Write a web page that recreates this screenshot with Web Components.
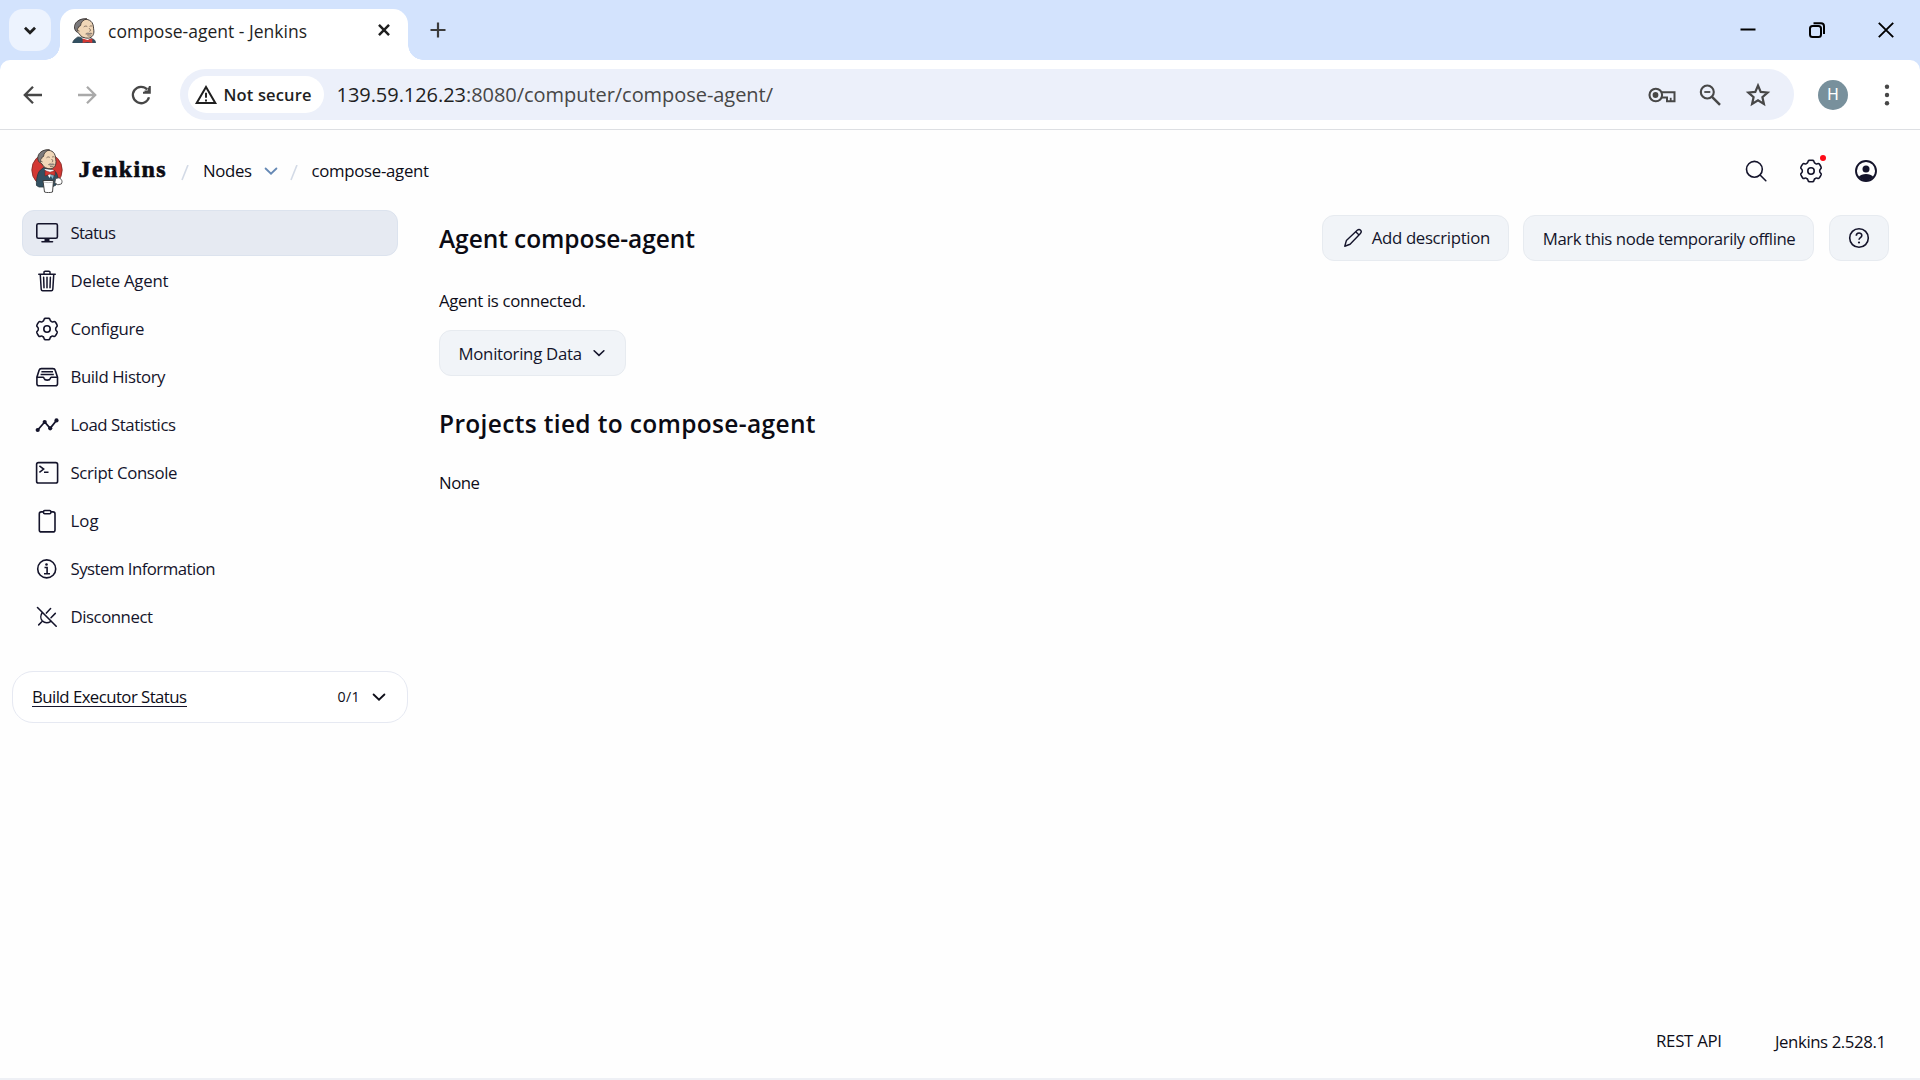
<!DOCTYPE html>
<html lang="en">
<head>
<meta charset="utf-8">
<title>compose-agent - Jenkins</title>
<style>
html,body{margin:0;padding:0;height:100%;overflow:hidden;background:#fefefe}
body{font-family:"Open Sans","Noto Sans",sans-serif;color:#14141f}
</style>
</head>
<body>
<browser-window>
  <jenkins-page></jenkins-page>
</browser-window>
<script>
const polar=(deg,r)=>{const a=(deg-90)*Math.PI/180;return (12+r*Math.cos(a)).toFixed(2)+' '+(12+r*Math.sin(a)).toFixed(2)};
let gear='M'+polar(-30,8.8);
for(let k=0;k<6;k++){const b=k*60;
  gear+=`C${polar(b-17,8)} ${polar(b-20,10.9)} ${polar(b-11,10.8)}A10.8 10.8 0 0 1 ${polar(b+11,10.8)}C${polar(b+20,10.9)} ${polar(b+17,8)} ${polar(b+30,8.8)}`;}
gear+='Z';
const butlerHead=`
<path d="M8.500 13C6.500 10 7.500 5 11 2.500 15 .2 21 .8 23.300 4.500 25 7.500 24.500 10 25 12.500 25.300 16 23.500 19.300 20 19.800 16 20 12.500 18.500 11 15Z" fill="#f0d6b7" stroke="#3a3330" stroke-width=".9"/>
<path d="M8.800 13.500C5.800 11 6.500 6 9 3.700 11.500 1.300 15.500.3 18.500.8 14.800 2 12.800 4 12.500 7.500L10.800 8.500 10.300 12Z" fill="#7b797b" stroke="#3a3330" stroke-width=".8"/>
<path d="M10.600 9.200c-1.700.6-1 3.800.9 3.700" fill="#f0d6b7" stroke="#3a3330" stroke-width=".7"/>
<path d="M15.500 8.800c1-1 2.300-1.100 3.300-.4M21 8.200c.8-.6 1.700-.6 2.400 0M20.500 10c1.600 1.400 1.900 2.700.3 3.100M19 17.300c1.300.5 2.600.4 3.600-.1" fill="none" stroke="#5a4a42" stroke-width=".7"/>
<path d="M17.300 15.700c1.300-1.300 2.500-1.200 3.500-.7 1-.4 1.900-.2 2.700.4-2.200.8-4 1-6.200.3z" fill="#a39d9a" stroke="#5a4a42" stroke-width=".4"/>`;
const ICONS={
 chevDown:'<path d="M6.500 9.500L12 15l5.500-5.500" stroke-width="3"/>',
 close:'<path d="M6.500 6.500l11 11M17.500 6.500l-11 11" stroke-width="2.700"/>',
 plus:'<path d="M12 4.500v15M4.500 12h15" stroke-width="2.200"/>',
 back:'<path d="M21 12H4.500M12 3.800L3.800 12l8.200 8.200" stroke-width="2.300" />',
 fwd:'<path d="M3 12h16.500M12 3.800l8.200 8.200-8.200 8.200" stroke-width="2.300"/>',
 reload:'<path d="M20 14.200A8.200 8.200 0 1 1 18.200 6.500" stroke-width="2.300"/><path d="M20.800 3v6.700H14M15.500 8.600h4.200V4.500" stroke-width="2"/>',
 warn:'<path d="M12 4L2.700 20h18.600z" stroke-width="2"/><path d="M12 9.800v5M12 16.500v2" stroke-width="1.900"/>',
 min:'<path d="M4.500 11.500h15" stroke-width="2"/>',
 restore:'<rect x="5" y="8" width="11" height="11" rx="2.500" stroke-width="2"/><path d="M8.500 5.300h7.500a3 3 0 0 1 3 3v7.700" stroke-width="2"/>',
 winClose:'<path d="M4.800 4.800l14.400 14.400M19.200 4.800L4.800 19.200" stroke-width="1.900"/>',
 key:'<circle cx="7.800" cy="12" r="6.300" stroke-width="2.100"/><circle cx="7.500" cy="12" r="2.900" fill="currentColor" stroke="none"/><path d="M13.800 9.300H26.500v9h-7.500v-3.800h-5.200" stroke-width="2"/><path d="M22.700 18.300v-3.500" stroke-width="1.800"/>',
 zoomOut:'<circle cx="9.300" cy="9" r="6.500" stroke-width="2.100"/><path d="M14 13.800l8 8" stroke-width="2.500"/><path d="M6.300 9h6" stroke-width="1.800"/>',
 star:'<path d="M12 2.500l2.700 6.400 6.900.6-5.200 4.600 1.500 6.800-5.900-3.600-5.900 3.600 1.500-6.800L2.400 9.500l6.900-.6z" stroke-width="2.200" stroke-linejoin="miter"/>',
 dots:'<g fill="currentColor" stroke="none"><circle cx="12" cy="3.700" r="2.200"/><circle cx="12" cy="12" r="2.200"/><circle cx="12" cy="20.300" r="2.200"/></g>',
 search:'<g stroke-linecap="round"><circle cx="10.400" cy="10.300" r="7.900"/><path d="M16.300 16.200l5.500 5.500"/></g>',
 gear:`<path d="${gear}" stroke-linejoin="round"/><circle cx="12" cy="12" r="3.200"/>`,
 user:'<clipPath id="c"><circle cx="12" cy="12" r="9.500"/></clipPath><circle cx="12" cy="12" r="10" stroke-width="1.900"/><circle cx="12" cy="10" r="3.500" fill="currentColor" stroke="none"/><path clip-path="url(#c)" d="M4 18.500C6.500 15.500 9 14.900 12 14.900s5.500.6 8 3.600V23H4z" fill="currentColor" stroke="none"/>',
 chevThin:'<path d="M5.500 9l6.500 6.200L18.500 9" stroke-width="2.200" stroke-linecap="round"/>',
 monitor:'<rect x="1.800" y="2.800" width="20.600" height="14.500" rx="1.500"/><path d="M7 20.800h10.500" stroke-linecap="round"/><path d="M9.500 17.500h5v3h-5z" fill="currentColor" stroke="none"/>',
 trash:'<g transform="scale(.046875)" stroke-width="32" stroke-linecap="round" stroke-linejoin="round"><path d="M112 112l20 320c.95 18.490 14.400 32 32 32h184c17.670 0 30.870-13.510 32-32l20-320M80 112h352M192 112V72a23.930 23.930 0 0 1 24-24h80a23.930 23.930 0 0 1 24 24v40M256 176v224M184 176l8 224M328 176l-8 224"/></g>',
 history:'<path d="M1.900 12.200V18.800a2 2 0 0 0 2 2h16.600a2 2 0 0 0 2-2V12.200L20.200 5.300C19.900 4 19 3.600 17.900 3.600H6.400C5.300 3.600 4.500 4 4.100 5.300z"/><path d="M6.400 6.800h11.600M5.600 9.500h13.200" stroke-width="1.400"/><path d="M1.900 12.200h6.300c.6 0 .7.500.8 1 .8 2.600 5.600 2.600 6.400 0 .1-.5.200-1 .8-1h6.300"/>',
 chart:'<path d="M2.700 17L9.700 9l5.500 6.400L21.600 7.200" stroke-width="1.800"/><g fill="currentColor" stroke="none"><circle cx="2.700" cy="17" r="2.100"/><circle cx="9.700" cy="9" r="2.100"/><circle cx="15.200" cy="15.300" r="2.100"/><circle cx="21.500" cy="7.400" r="2.100"/></g>',
 console:'<rect x="1.600" y="1.600" width="21" height="20.400" rx="1.800"/><path d="M4.400 4.800l4.300 3.300-4.300 3.300M9 11.200h4.500" stroke-width="1.500"/>',
 clip:'<rect x="4.300" y="2.900" width="15.700" height="20" rx="2"/><rect x="8.500" y="1.500" width="7.400" height="3.200" rx="1.200" fill="var(--page,#fefefe)" stroke-width="1.500"/>',
 info:'<circle cx="11.700" cy="11.900" r="9"/><circle cx="11.500" cy="7.500" r="1.300" fill="currentColor" stroke="none"/><path d="M9.500 10.500h2.600v6.300M9 16.800h6" stroke-width="1.600"/>',
 plug:'<path d="M2.500 2.500l18.700 18.700" stroke-linecap="round"/><path d="M7.200 7.700C5.500 10 5.300 13.500 7.200 15.800c2.400 2.300 6 2.300 8.700.6M7.300 16.300l-3.600 3.600M15.600 3.600l-4.200 4.500M20.300 8.400L16 12.700" stroke-linecap="round" stroke-width="1.500"/>',
 pencil:'<g stroke-linejoin="round" stroke-width="1.500"><path d="M3 21l1.800-6.200L16.600 3.600c1.300-1.200 2.800-1 3.700-.1s.9 2.300-.2 3.500L8.800 18.800z"/><path d="M15 5.300l3.600 3.500"/></g>',
 help:'<circle cx="12" cy="12" r="9.300"/><path d="M9.300 9.700c0-3.500 5.500-3.400 5.500-.3 0 2.200-2.800 2.200-2.800 4.400" stroke-width="1.600"/><circle cx="12" cy="16.500" r="1.100" fill="currentColor" stroke="none"/>'
};
const define=(name,css,html,after)=>customElements.define(name,class extends HTMLElement{
  connectedCallback(){
    if(this.shadowRoot)return;
    this.attachShadow({mode:'open'}).innerHTML=`<style>*{box-sizing:border-box}${css}</style>`+(typeof html==='function'?html(this):html);
    if(after)after(this);
  }
});

define('ui-icon',':host{display:block;flex:none;line-height:0}svg{display:block;overflow:visible}',el=>{
  const s=el.getAttribute('size')||24,w=el.getAttribute('box')||24;
  return `<svg width="${s*w/24}" height="${s}" viewBox="0 0 ${w} 24" fill="none" stroke="currentColor" stroke-width="1.600">${ICONS[el.getAttribute('name')]}</svg>`;
});

/* Single line of text whose tracking is tuned to the measure given in w. */
define('ui-text',':host{display:block;flex:none;white-space:pre}span{display:inline-block}','<span><slot></slot></span>',el=>{
  const w=+el.getAttribute('w'),span=el.shadowRoot.querySelector('span');
  if(!w)return;
  const n=el.textContent.length,cur=span.getBoundingClientRect().width;
  span.style.letterSpacing=((w-cur)/(n-1))+'px';
  el.style.width=w+'px';
});

define('butler-mark',':host{display:block;flex:none;line-height:0}svg{display:block}',el=>el.hasAttribute('small')
 ?`<svg width="24" height="25" viewBox="4.500 0 22.500 24.500" preserveAspectRatio="none"><path d="M5 25c.3-3 2-4.500 5-6.500l12 1.500c3 .5 4.500 1.500 4.800 5z" fill="#335061" stroke="#263740" stroke-width=".6"/><path d="M13 19l5 4 5-4z" fill="#fff"/>${butlerHead}<path d="M14.500 20l4.500 1.500 4.500-1.500v4.500l-4.500-1-4.500 1z" fill="#d33833"/></svg>`
 :`<svg width="32" height="44" viewBox="0 0 32 44">
 <ellipse cx="16" cy="21" rx="15.200" ry="16.200" fill="#d33833" stroke="#7c2723" stroke-width=".8"/>
 <path d="M5.500 36.500C5 33 6 26 8 22.500l4.500-4 9 2.500c3.500 1 5 4 5.500 9L25 36l-4 2H8z" fill="#335061" stroke="#263740" stroke-width=".8"/>
 <path d="M13.500 20l5 9 4.500-8z" fill="#fff"/>
 ${butlerHead}
 <path d="M18.700 25.500l3 4.500 1.500-5z" fill="#81b0c4"/>
 <path d="M14 21.500l5 1.700 5-1.700v5l-5-1.500-5 2z" fill="#d33833" stroke="#711c18" stroke-width=".5"/>
 <path d="M24.500 30c1.500-1.500 4.500-1.500 5.500.2 1.300 1.300 1.300 3.300.3 4.800l-3.500.8-3-2z" fill="#fff" stroke="#4a4a4a" stroke-width=".9"/>
 <path d="M12 31.500h10.500l-1 11.500c-2 .8-6 .8-8 0z" fill="#fff" stroke="#333" stroke-width=".9"/>
 <path d="M12.300 33c3 .8 7 .8 10 0" fill="none" stroke="#999" stroke-width=".6"/></svg>`);

define('browser-tabs',`
:host{display:flex;height:60px;background:#d3e3fd;padding-left:9px;align-items:flex-start;color:#1f1f1f}
.menu{width:42px;height:42px;margin-top:9px;border-radius:14px;background:#edf3fe;display:flex;align-items:center;justify-content:center}
.tab{position:relative;margin:9px 0 0 9px;width:348px;height:51px;background:#fff;border-radius:15px 15px 0 0;display:flex;align-items:center;padding:0 13px 8px 12px}
.tab::before,.tab::after{content:"";position:absolute;bottom:0;width:15px;height:15px}
.tab::before{left:-15px;background:radial-gradient(circle at 0 0,transparent 14.500px,#fff 15px)}
.tab::after{right:-15px;background:radial-gradient(circle at 100% 0,transparent 14.500px,#fff 15px)}
ui-text{font-size:17.500px;line-height:24px;margin:0 auto 0 12px}
.plus{margin:18px auto 0 18px;color:#3c3c3c}
.win{display:flex;gap:45px;padding:17.500px 22.500px 0 0;color:#000}
`,`<div class="menu"><ui-icon name="chevDown" size="22"></ui-icon></div>
<div class="tab"><butler-mark small></butler-mark><ui-text w="199">compose-agent - Jenkins</ui-text><ui-icon name="close" size="22" style="margin-top:-1px"></ui-icon></div>
<ui-icon class="plus" name="plus"></ui-icon>
<div class="win"><ui-icon name="min"></ui-icon><ui-icon name="restore"></ui-icon><ui-icon name="winClose"></ui-icon></div>`);

define('browser-toolbar',`
:host{display:block;background:#d3e3fd}
.bar{display:flex;align-items:center;height:70px;background:#fff;border-bottom:1px solid #dddfe3;border-radius:10px 10px 0 0;padding:0 21px;color:#474747}
.nav{display:flex;gap:30px}.dim{color:#a9a9a9}
.omni{margin:0 24px 0 27px;flex:1;height:51px;border-radius:26px;background:#ecf0fa;display:flex;align-items:center;padding:0 24px 0 8px}
.chip{width:136px;height:37px;border-radius:19px;background:#fff;display:flex;align-items:center;padding-left:6px;color:#1f1f1f}
.chip ui-text{font-weight:600;font-size:16.500px;line-height:24px;margin-left:5.500px}
.url{font-size:20px;line-height:28px;margin:0 auto 0 12.500px}
.url b{font-weight:400;color:#1f1f1f}
.tools{display:flex;align-items:center;gap:24px}
.avatar{width:30px;height:30px;border-radius:50%;background:#78909c;color:#fff;font:16px/30px Roboto,sans-serif;text-align:center;margin-right:27px}
`,`<div class="bar"><div class="nav"><ui-icon name="back"></ui-icon><ui-icon class="dim" name="fwd"></ui-icon><ui-icon name="reload"></ui-icon></div>
<div class="omni"><div class="chip"><ui-icon name="warn"></ui-icon><ui-text w="88">Not secure</ui-text></div>
<ui-text class="url" w="436.500"><b>139.59.126.23</b>:8080/computer/compose-agent/</ui-text>
<div class="tools"><ui-icon name="key" box="28" style="margin-right:-2px"></ui-icon><ui-icon name="zoomOut"></ui-icon><ui-icon name="star"></ui-icon></div></div>
<div class="avatar">H</div><ui-icon name="dots"></ui-icon></div>`);

define('browser-window',':host{display:flex;flex-direction:column;width:1920px;height:1080px}','<browser-tabs></browser-tabs><browser-toolbar></browser-toolbar><slot></slot>');

define('jenkins-header',`
:host{display:flex;align-items:center;height:80px;padding:2px 42px 0 30.500px}
.brand{font:bold 24px/30px "Liberation Serif",serif;color:#0b0b14;-webkit-text-stroke:.6px #0b0b14;margin:-4px 0 0 16px}
.crumb{font-size:16.800px;line-height:24px}
.sl{display:block;flex:none}
.right{margin-left:auto;display:flex;gap:31px;color:#14142b}
.g{position:relative}.g::after{content:"";position:absolute;left:21px;top:-4px;width:6px;height:6px;border-radius:50%;background:#fe0b18}
`,`<butler-mark></butler-mark><ui-text class="brand" w="87">Jenkins</ui-text>
<svg class="sl" style="margin:4px 14px 0 15.500px" width="8" height="16"><path d="M7 0L1 15" stroke="#d3dae6" stroke-width="1.600"/></svg>
<ui-text class="crumb" w="49">Nodes</ui-text><ui-icon name="chevThin" size="20" style="color:#6689b5;margin-left:9px"></ui-icon>
<svg class="sl" style="margin:4px 14px 0 8.500px" width="8" height="16"><path d="M7 0L1 15" stroke="#d3dae6" stroke-width="1.600"/></svg>
<ui-text class="crumb" w="117.500">compose-agent</ui-text>
<div class="right"><ui-icon name="search"></ui-icon><ui-icon class="g" name="gear"></ui-icon><ui-icon name="user"></ui-icon></div>`);

define('side-item',`
:host{display:flex;align-items:center;height:46px;border-radius:12px;border:1px solid transparent;padding-left:12px;gap:11.500px;color:#14142b}
:host([active]){background:#e6eaf2;border-color:#dce3ee}
ui-text{font-size:16.800px;line-height:24px}
`,el=>`<ui-icon name="${el.getAttribute('icon')}"></ui-icon><ui-text w="${el.getAttribute('w')}">${el.textContent}</ui-text>`);

define('executor-card',`
:host{display:flex;align-items:center;height:52px;border:1.500px solid #e6e9f2;border-radius:21px;background:#fff;padding:0 18px 0 19px}
a{color:inherit;margin-right:auto;border-bottom:1.500px solid #14142b;height:19px;margin-top:1px}
ui-text{font-size:16.800px}
a ui-text{line-height:17px}
.n{font-size:14.200px;line-height:20px;margin-right:9.500px}
`,'<a><ui-text w="155">Build Executor Status</ui-text></a><ui-text class="n" w="22">0/1</ui-text><ui-icon name="chevThin" size="20" style="margin-top:-1px"></ui-icon>');

define('jenkins-button',`
:host{display:flex;align-items:center;justify-content:center;height:46px;border-radius:12px;background:#f1f4f8;border:1px solid #e7ebf0;color:#14142b;font-size:16.800px;line-height:24px;--page:#f1f4f8}
`,'<slot></slot>');

define('jenkins-page',`
:host{flex:1;display:flex;flex-direction:column;background:#fefefe;border-bottom:2px solid #eef0f5;color:#0d0d18;font-size:16.800px;line-height:24px}
.body{flex:1;display:grid;grid-template-columns:439px 1fr}
aside{padding:0 31px 0 12px}
nav{display:flex;flex-direction:column;gap:2px;padding:0 10px}
executor-card{margin-top:31px}
main{padding:5px 31px 0 0}
.top{display:flex;align-items:center;height:46px}
h1,h2{margin:0;font-size:24.500px;line-height:34px;font-weight:600;color:#0b0b14}
h1{padding-top:2px}
.acts{margin-left:auto;display:flex;align-items:center}
footer{display:flex;justify-content:flex-end;gap:53px;padding:0 34px 24px 0}
`,`<jenkins-header></jenkins-header>
<div class="body"><aside><nav>
<side-item active icon="monitor" w="45.500">Status</side-item>
<side-item icon="trash" w="98">Delete Agent</side-item>
<side-item icon="gear" w="74">Configure</side-item>
<side-item icon="history" w="95">Build History</side-item>
<side-item icon="chart" w="105.500">Load Statistics</side-item>
<side-item icon="console" w="107">Script Console</side-item>
<side-item icon="clip" w="28">Log</side-item>
<side-item icon="info" w="145">System Information</side-item>
<side-item icon="plug" w="82.500">Disconnect</side-item>
</nav><executor-card></executor-card></aside>
<main><div class="top"><h1><ui-text w="256">Agent compose-agent</ui-text></h1>
<div class="acts"><jenkins-button style="width:187px"><ui-icon name="pencil" size="22" style="margin:0 8px 0 1px"></ui-icon><ui-text w="118.500">Add description</ui-text></jenkins-button>
<jenkins-button style="width:291px;margin:0 15px 0 14px"><ui-text style="margin:2px 0 0 1.500px" w="253">Mark this node temporarily offline</ui-text></jenkins-button>
<jenkins-button style="width:60px"><ui-icon name="help"></ui-icon></jenkins-button></div></div>
<ui-text style="margin-top:28px" w="147">Agent is connected.</ui-text>
<jenkins-button style="width:187px;margin-top:17px"><ui-text style="margin:2px 0 0 1px" w="123.500">Monitoring Data</ui-text><ui-icon name="chevThin" size="18" style="margin-left:7.500px"></ui-icon></jenkins-button>
<h2 style="margin-top:31px"><ui-text w="376.500">Projects tied to compose-agent</ui-text></h2>
<ui-text style="margin-top:30px" w="41">None</ui-text></main></div>
<footer><ui-text style="margin-top:-1px" w="66">REST API</ui-text><ui-text w="111">Jenkins 2.528.1</ui-text></footer>`);
</script>
</body>
</html>
